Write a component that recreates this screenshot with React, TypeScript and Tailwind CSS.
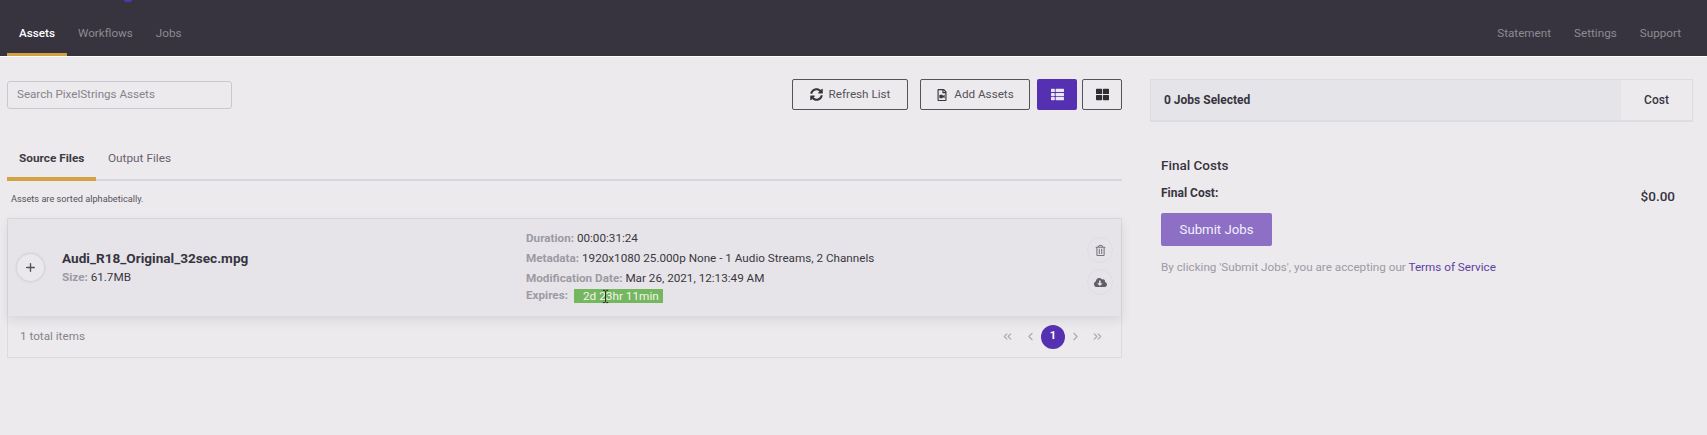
import { ChevronLeft, ChevronRight, ChevronsLeft, ChevronsRight, Plus } from 'lucide-react';
import { FaCloudDownloadAlt, FaRegFileVideo, FaRegTrashAlt, FaSyncAlt, FaThLarge, FaThList } from 'react-icons/fa';

const meta = [
  { label: 'Duration:', value: '00:00:31:24' },
  { label: 'Metadata:', value: '1920x1080 25.000p None - 1 Audio Streams, 2 Channels' },
  { label: 'Modification Date:', value: 'Mar 26, 2021, 12:13:49 AM' },
];

export default function App() {
  return (
    <div className="h-[435px] overflow-hidden bg-[#edeaee] font-['Roboto',sans-serif] text-[#3a3740]">
      <header className="relative flex h-[57px] items-end justify-between border-b border-white bg-[#37343f] pl-[7px] pr-[26px] text-[11.7px]">
        <div className="absolute left-[124px] top-0 h-[2px] w-[8px] rounded-b-full bg-[#5b2fb5]" />
        <nav className="flex">
          <a className="h-[56px] w-[60px] border-b-[3px] border-[#d3a243] pt-[25px] text-center font-medium text-white">Assets</a>
          <a className="ml-[11px] pt-[25px] text-[#8d8b92]">Workflows</a>
          <a className="ml-[23px] pt-[25px] text-[#8d8b92]">Jobs</a>
        </nav>
        <nav className="flex gap-[23px] pb-[13px] text-[#8d8b92]">
          <a>Statement</a>
          <a>Settings</a>
          <a>Support</a>
        </nav>
      </header>

      <main className="flex pl-[7px]">
        <section className="w-[1115px]">
          <div className="flex h-[53px] items-end justify-between">
            <div className="mb-[1px] flex h-[28px] w-[225px] items-center rounded-[3px] border border-[#c9c8d0] pl-[9px] text-[11.6px] text-[#85838b]">
              Search PixelStrings Assets
            </div>
            <div className="flex text-[11.7px] text-[#55525a]">
              <button className="flex h-[31px] w-[116px] items-center justify-center gap-[6px] rounded-[2px] border border-[#55525a]">
                <FaSyncAlt className="size-[13px] text-[#37343f]" />
                Refresh List
              </button>
              <button className="ml-[12px] flex h-[31px] w-[110px] items-center justify-center gap-[6px] rounded-[2px] border border-[#55525a]">
                <FaRegFileVideo className="size-[12px] text-[#37343f]" />
                Add Assets
              </button>
              <button className="ml-[7px] flex h-[31px] w-[40px] items-center justify-center rounded-[2px] bg-[#5530b0] text-[#ece6f7]">
                <FaThList className="size-[13px]" />
              </button>
              <button className="ml-[5px] flex h-[31px] w-[40px] items-center justify-center rounded-[2px] border border-[#55525a] text-[#2f2c33]">
                <FaThLarge className="size-[13px]" />
              </button>
            </div>
          </div>

          <div className="mt-[30px] flex h-[41px] items-end border-b-2 border-[#d7d6df] text-[11.8px]">
            <div className="-mb-[2px] h-[31px] w-[89px] border-b-4 border-[#d3a243] pl-[12px] font-bold text-[#3f3c44]">Source Files</div>
            <div className="h-[29px] pl-[12px] text-[#66636b]">Output Files</div>
          </div>

          <p className="mt-[12px] pl-[4px] text-[9.2px] leading-[12px] text-[#55525a]">Assets are sorted alphabetically.</p>

          <div className="mt-[13px] border border-[#dbdae0]">
            <div className="flex h-[97px] items-center bg-[#e6e4e9] shadow-[0_4px_10px_rgba(60,55,70,0.12)]">
              <div className="ml-[9px] flex size-[27px] items-center justify-center rounded-full bg-[#eae8ec] text-[#55525a] shadow-[0_0_3px_rgba(60,55,70,0.25)]">
                <Plus className="size-[13px]" strokeWidth={2.6} />
              </div>
              <div className="ml-[18px] w-[464px]">
                <div className="text-[13.6px] font-bold leading-[18px] text-[#37343f]">Audi_R18_Original_32sec.mpg</div>
                <div className="mt-[1px] text-[11.7px] leading-[18px]">
                  <span className="font-bold text-[#9c9aa2]">Size:</span> 61.7MB
                </div>
              </div>
              <div className="mb-[4px] text-[11.7px] leading-[20px]">
                {meta.map((row) => (
                  <div key={row.label}>
                    <span className="font-bold text-[#9c9aa2]">{row.label}</span> {row.value}
                  </div>
                ))}
                <div className="flex h-[15px] items-center leading-[15px]">
                  <span className="font-bold text-[#9c9aa2]">Expires:</span>
                  <span className="relative ml-[6px] h-[14px] w-[89px] bg-[#74b75f] pl-[9px] text-[11.8px] leading-[14px] text-[#f3f3ee]">
                    2d 23hr 11min
                    <svg viewBox="0 0 8 16" className="absolute left-[28px] top-0 h-[15px] w-[7px] text-[#1f1d22]" fill="none" stroke="currentColor" strokeWidth="1">
                      <path d="M1 1h2l1 1 1-1h2M4 2v12M1 15h2l1-1 1 1h2" />
                    </svg>
                  </span>
                </div>
              </div>
              <div className="ml-auto mb-[3px] mr-[8px] flex flex-col gap-[6px]">
                <div className="flex size-[26px] items-center justify-center rounded-full border border-[#dfdde3] text-[#77747c]">
                  <FaRegTrashAlt className="size-[11px]" />
                </div>
                <div className="flex size-[26px] items-center justify-center rounded-full border border-[#dfdde3] text-[#625f67]">
                  <FaCloudDownloadAlt className="size-[13px]" />
                </div>
              </div>
            </div>
            <div className="flex h-[41px] items-center justify-between pl-[12px] pr-[17px] text-[11.7px] text-[#85838b]">
              <span>1 total items</span>
              <div className="flex items-center text-[#aaa8ae]">
                <ChevronsLeft className="size-[13px]" />
                <ChevronLeft className="ml-[10px] size-[13px]" />
                <span className="ml-[4px] flex size-[24px] items-center justify-center rounded-full bg-[#5530b0] text-[11px] font-bold text-white">1</span>
                <ChevronRight className="ml-[4px] size-[13px]" />
                <ChevronsRight className="ml-[9px] size-[13px]" />
              </div>
            </div>
          </div>
        </section>

        <aside className="ml-[28px] w-[543px]">
          <div className="mt-[22px] flex h-[43px] border border-[#dddce2] border-b-2 text-[12px] font-bold text-[#37343f]">
            <div className="flex flex-1 items-center bg-[#e5e4e8] pl-[13px]">0 Jobs Selected</div>
            <div className="flex w-[71px] items-center justify-center font-medium">Cost</div>
          </div>
          <div className="pl-[11px] pr-[18px]">
            <h3 className="mt-[34px] text-[13.5px] font-medium leading-[18px] text-[#37343f]">Final Costs</h3>
            <div className="mt-[11px] flex items-start justify-between">
              <span className="text-[12px] font-bold leading-[16px] text-[#37343f]">Final Cost:</span>
              <span className="mt-[2px] text-[13.5px] font-medium leading-[18px] text-[#37343f]">$0.00</span>
            </div>
            <button className="mt-[8px] h-[33px] w-[111px] rounded-[2px] bg-[#8d70c6] text-[13.2px] text-[#f3eefa]">Submit Jobs</button>
            <p className="mt-[13px] text-[11.7px] leading-[16px] text-[#9c9aa2]">
              By clicking 'Submit Jobs', you are accepting our <a className="text-[#5d41a0]">Terms of Service</a>
            </p>
          </div>
        </aside>
      </main>
    </div>
  );
}
